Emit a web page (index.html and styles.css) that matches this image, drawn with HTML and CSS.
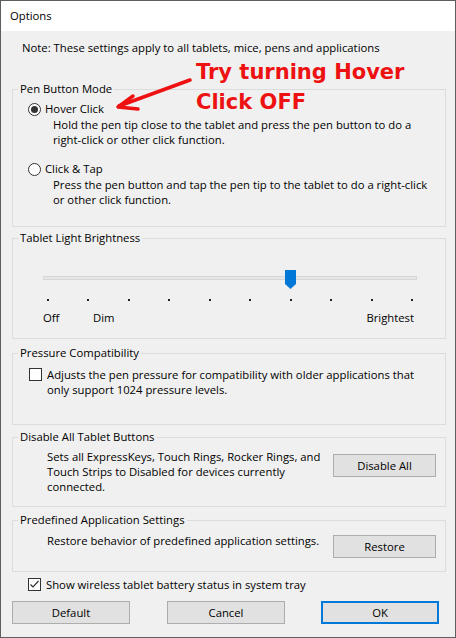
FILE: index.html
```html
<!DOCTYPE html>
<html>
<head>
<meta charset="utf-8">
<title>Options</title>
<link rel="stylesheet" href="styles.css">
</head>
<body>
<div class="window">
  <div class="titlebar">Options</div>
  <div class="content">
    <p class="note">Note: These settings apply to all tablets, mice, pens and applications</p>

    <fieldset class="group g-pen">
      <legend>Pen Button Mode</legend>
      <div class="inner">
        <div class="radio-row"><span class="radio checked"></span><span>Hover Click</span></div>
        <p class="desc">Hold the pen tip close to the tablet and press the pen button to do a<br>right-click or other click function.</p>
        <div class="radio-row r2"><span class="radio"></span><span>Click &amp; Tap</span></div>
        <p class="desc">Press the pen button and tap the pen tip to the tablet to do a right-click<br>or other click function.</p>
      </div>
    </fieldset>

    <fieldset class="group g-light">
      <legend>Tablet Light Brightness</legend>
      <div class="inner">
        <div class="slider">
          <div class="track"></div>
          <svg class="thumb" width="11" height="19" viewBox="0 0 11 19"><path d="M0 0H11V14L5.5 19L0 14Z" fill="#0078d7"/></svg>
        </div>
        <div class="ticks">
          <i></i><i></i><i></i><i></i><i></i><i></i><i></i><i></i><i></i><i></i>
        </div>
        <div class="tick-labels">
          <span class="lbl-off">Off</span><span>Dim</span><span class="lbl-max">Brightest</span>
        </div>
      </div>
    </fieldset>

    <fieldset class="group g-pressure">
      <legend>Pressure Compatibility</legend>
      <div class="inner check-block">
        <span class="checkbox"></span>
        <p class="text">Adjusts the pen pressure for compatibility with older applications that<br>only support 1024 pressure levels.</p>
      </div>
    </fieldset>

    <fieldset class="group g-disable">
      <legend>Disable All Tablet Buttons</legend>
      <div class="inner action-row">
        <p class="text">Sets all ExpressKeys, Touch Rings, Rocker Rings, and<br>Touch Strips to Disabled for devices currently<br>connected.</p>
        <button class="btn">Disable All</button>
      </div>
    </fieldset>

    <fieldset class="group g-predef">
      <legend>Predefined Application Settings</legend>
      <div class="inner action-row">
        <p class="text">Restore behavior of predefined application settings.</p>
        <button class="btn btn-restore">Restore</button>
      </div>
    </fieldset>

    <div class="battery-row">
      <span class="checkbox"><svg width="11" height="11" viewBox="0 0 11 11"><polyline points="1.5,5.5 4,8 9.5,2" fill="none" stroke="#333" stroke-width="1.2"/></svg></span>
      <span>Show wireless tablet battery status in system tray</span>
    </div>

    <div class="buttons">
      <button class="btn btn-wide">Default</button>
      <button class="btn btn-wide btn-cancel">Cancel</button>
      <button class="btn btn-wide btn-ok">OK</button>
    </div>
  </div>

  <div class="annotation">Try turning Hover<br>Click OFF</div>
  <svg class="arrow" width="456" height="140" viewBox="0 0 456 140">
    <path d="M189 79 L118 105" fill="none" stroke="#ee1111" stroke-width="3.5" stroke-linecap="round"/>
    <path d="M132 95 L117 106 L137 108" fill="none" stroke="#ee1111" stroke-width="3.5" stroke-linecap="round" stroke-linejoin="round"/>
  </svg>
</div>
</body>
</html>
```

FILE: styles.css
```css
* { box-sizing: border-box; }
html, body { margin: 0; padding: 0; }
body {
  width: 456px;
  height: 638px;
  background: #f0f0f0;
  font-family: "Open Sans", "Noto Sans", sans-serif;
  font-size: 11.3px;
  line-height: 15px;
  color: #000;
  overflow: hidden;
}
p { margin: 0; white-space: nowrap; }

.window {
  position: relative;
  width: 456px;
  height: 638px;
  border: 1px solid #5e5e5e;
  background: #f0f0f0;
  display: flex;
  flex-direction: column;
}
.titlebar {
  height: 30px;
  background: #fff;
  padding-left: 9px;
  line-height: 30px;
}
.content {
  flex: 1;
  display: flex;
  flex-direction: column;
  padding: 0 9px 0 11px;
}
.note { margin: 9px 0 0 10px; }

.group {
  margin: 0;
  padding: 0;
  border: 1px solid #dcdcdc;
  min-width: 0;
}
.group legend {
  margin-left: 5px;
  padding: 0 2px;
  line-height: 16px;
}
.g-pen { margin-top: 26px; }
.g-pen .inner { padding: 4px 0 19px 15px; }
.radio-row { display: flex; align-items: center; line-height: 16px; height: 16px; }
.radio-row.r2 { margin-top: 14px; }
.radio {
  width: 13px; height: 13px;
  border: 1px solid #333;
  border-radius: 50%;
  background: #fff;
  margin-right: 4px;
  display: flex; align-items: center; justify-content: center;
}
.radio.checked::after {
  content: "";
  width: 7px; height: 7px;
  border-radius: 50%;
  background: #333;
}
.desc { padding-left: 25px; }

.g-light { margin-top: 3px; }
.g-light .inner { padding: 0 0 13px 30px; }
.slider { position: relative; margin-top: 30px; width: 374px; }
.track {
  height: 4px;
  background: #e7e7e7;
  border: 1px solid #d6d6d6;
}
.thumb { position: absolute; left: 242px; top: -6px; }
.ticks {
  margin: 19px 0 0 4px;
  width: 366px;
  display: flex;
  justify-content: space-between;
}
.ticks i { width: 2px; height: 2px; background: #222; }
.tick-labels {
  margin-top: 9px;
  width: 371px;
  display: flex;
}
.lbl-off { width: 50px; }
.lbl-max { margin-left: auto; }

.g-pressure { margin-top: 6px; }
.check-block { display: flex; align-items: flex-start; padding: 6px 0 27px 16px; }
.checkbox {
  width: 13px; height: 13px;
  flex: none;
  border: 1px solid #333;
  background: #fff;
  display: flex; align-items: center; justify-content: center;
}
.check-block .checkbox { margin-top: 1px; margin-right: 5px; }

.g-disable { margin-top: 4px; }
.action-row { display: flex; align-items: flex-start; padding-left: 34px; }
.g-disable .action-row { padding-top: 4px; padding-bottom: 12px; }
.action-row .text { flex: 1; }
.btn {
  font: inherit;
  color: #000;
  height: 23px;
  padding: 0;
  background: #e1e1e1;
  border: 1px solid #adadad;
  border-radius: 0;
}
.action-row .btn { width: 103px; margin-right: 9px; margin-top: 5px; }
.g-predef { margin-top: 5px; }
.g-predef .action-row { padding-top: 5px; padding-bottom: 13px; }
.g-predef .btn { margin-top: 2px; }

.battery-row {
  display: flex; align-items: center;
  margin-top: 5px;
  padding-left: 16px;
}
.battery-row .checkbox { margin-right: 5px; }

.buttons { display: flex; margin-top: 9px; }
.btn-wide { width: 118px; }
.btn-cancel { margin-left: 37px; }
.btn-ok { margin-left: 36px; border: 2px solid #0078d7; }

.annotation {
  position: absolute;
  left: 195px;
  top: 56px;
  font-family: "DejaVu Sans", sans-serif;
  font-weight: 700;
  font-size: 21px;
  line-height: 30px;
  color: #ee1111;
}
.arrow { position: absolute; left: 0; top: 0; }
```
